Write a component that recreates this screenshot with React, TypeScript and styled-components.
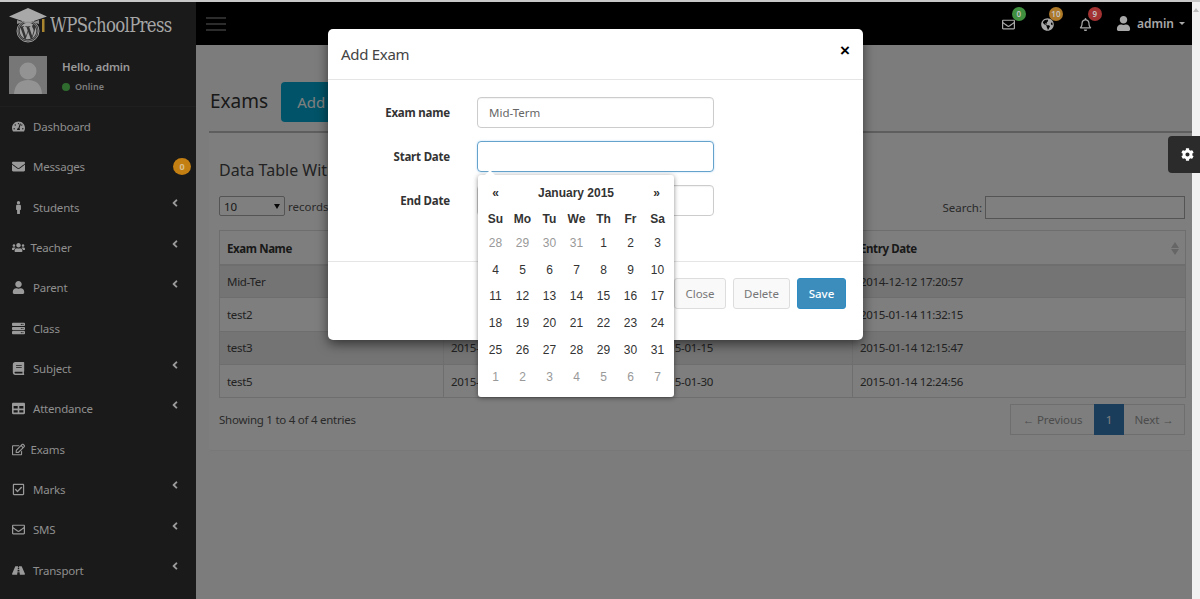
import React from "react";
import styled, { createGlobalStyle } from "styled-components";
import {
  FaBook,
  FaCog,
  FaEnvelope,
  FaGlobeAmericas,
  FaMale,
  FaRegBell,
  FaRegCheckSquare,
  FaRegEdit,
  FaRegEnvelope,
  FaRoad,
  FaServer,
  FaTable,
  FaTachometerAlt,
  FaUser,
  FaUsers,
  FaWordpress,
  FaAngleLeft,
} from "react-icons/fa";

const sans = `"Noto Sans", "Open Sans", sans-serif`;

const Global = createGlobalStyle`
  html, body { margin: 0; padding: 0; height: 100%; overflow: hidden; }
  body { font-family: ${sans}; font-size: 12px; color: #333; background: #fff; }
  * { box-sizing: border-box; }
`;

const Screen = styled.div`
  position: relative;
  height: 599px;
  display: flex;
  flex-direction: column;
  overflow: hidden;
`;
const TopLine = styled.div`
  position: relative;
  z-index: 1;
  height: 2px;
  flex: none;
  background: #c8c8c8;
`;
const Frame = styled.div`
  flex: 1;
  min-height: 0;
  display: flex;
`;
const Page = styled.div`
  flex: 1;
  min-width: 0;
  display: flex;
`;
const Scrollbar = styled.div`
  width: 8px;
  flex: none;
  background: #f1f1f1;
  display: flex;
  justify-content: center;
  padding-top: 6px;
  &::before {
    content: "";
    width: 0;
    height: 0;
    border-left: 3px solid transparent;
    border-right: 3px solid transparent;
    border-bottom: 4px solid #bdbdbd;
  }
`;

const Sidebar = styled.aside`
  position: relative;
  z-index: 1;
  width: 196px;
  flex: none;
  background: #1a1a1a;
  color: #8f8f8f;
  overflow: hidden;
`;
const Logo = styled.div`
  height: 43px;
  display: flex;
  align-items: center;
  padding: 2px 0 0 9px;
  gap: 3px;
  svg { display: block; }
`;
const LogoMark = styled.div`
  position: relative;
  width: 38px;
  height: 36px;
  flex: none;
`;
const LogoWp = styled(FaWordpress)`
  position: absolute;
  left: 9px;
  top: 14px;
  font-size: 20px;
  color: #a2a2a2;
`;
const LogoText = styled.span`
  font-family: "DejaVu Serif Condensed", "DejaVu Serif", serif;
  font-size: 20px;
  letter-spacing: -0.75px;
  color: #a6a6a6;
  line-height: 1;
  transform: scaleX(0.92);
  transform-origin: left center;
`;
const UserBlock = styled.div`
  height: 61.5px;
  display: flex;
  padding: 11px 0 0 9px;
  gap: 15px;
  border-bottom: 1px solid #1f1f1f;
`;
const Avatar = styled.svg`
  width: 38px;
  height: 38px;
  display: block;
`;
const UserInfo = styled.div`
  display: flex;
  flex-direction: column;
  padding-top: 3px;
`;
const Hello = styled.div`
  font-size: 11.5px;
  font-weight: 600;
  line-height: 16px;
  letter-spacing: -0.25px;
  color: #999;
`;
const Online = styled.div`
  display: flex;
  align-items: center;
  gap: 5px;
  margin-top: 6px;
  font-size: 9px;
  font-weight: 600;
  line-height: 12px;
  color: #7e7e7e;
`;
const Dot = styled.span`
  width: 8px;
  height: 8px;
  border-radius: 50%;
  background: #2f6b2f;
`;
const Menu = styled.nav`
  display: flex;
  flex-direction: column;
`;
const MenuItem = styled.div`
  height: 40.32px;
  display: flex;
  align-items: center;
  padding-left: 12px;
  font-size: 11.5px;
  letter-spacing: -0.2px;
  color: #8f8f8f;
`;
const MenuIcon = styled.span<{ $narrow?: boolean }>`
  width: ${(p) => (p.$narrow ? "18.5px" : "21px")};
  flex: none;
  display: flex;
  align-items: center;
  font-size: 13px;
  color: #9a9a9a;
`;
const MenuLabel = styled.span`
  flex: 1;
`;
const Chevron = styled(FaAngleLeft)`
  font-size: 12px;
  margin: -8px 15px 0 0;
  color: #9a9a9a;
`;
const CountBadge = styled.span`
  width: 18px;
  height: 17px;
  border-radius: 50%;
  margin-right: 5px;
  background: #c47f12;
  font-size: 9px;
  font-weight: 700;
  display: flex;
  align-items: center;
  justify-content: center;
  color: #d8c090;
`;

const Main = styled.main`
  flex: 1;
  min-width: 0;
  display: flex;
  flex-direction: column;
  background: #f9f9f9;
`;
const Header = styled.header`
  position: relative;
  z-index: 1;
  height: 43px;
  flex: none;
  background: #000;
  display: flex;
  align-items: center;
  justify-content: space-between;
  padding: 0 7px 0 10px;
`;
const Burger = styled.div`
  width: 20px;
  height: 14px;
  margin-top: 1px;
  border-top: 2px solid #2c2c2c;
  border-bottom: 2px solid #2c2c2c;
  display: flex;
  align-items: center;
  &::before {
    content: "";
    width: 100%;
    height: 2px;
    background: #2c2c2c;
  }
`;
const HeaderTools = styled.div`
  display: flex;
  align-items: center;
  color: #a8a8a8;
`;
const Tool = styled.div<{ $w: number }>`
  position: relative;
  width: ${(p) => p.$w}px;
  display: flex;
  align-items: center;
  font-size: 13px;
  padding-top: 1px;
`;
const ToolBadge = styled.span<{ $bg: string; $x: number }>`
  position: absolute;
  left: ${(p) => p.$x}px;
  top: -10px;
  width: 14px;
  height: 14px;
  border-radius: 50%;
  background: ${(p) => p.$bg};
  color: #c4c4c4;
  font-size: 8px;
  font-weight: 600;
  display: flex;
  align-items: center;
  justify-content: center;
`;
const Admin = styled.div`
  display: flex;
  align-items: center;
  gap: 6px;
  font-size: 12px;
  font-weight: 600;
  color: #a8a8a8;
  svg { font-size: 15px; }
  &::after {
    content: "";
    margin-left: -1px;
    border-left: 3.5px solid transparent;
    border-right: 3.5px solid transparent;
    border-top: 3.5px solid #a8a8a8;
  }
`;

const Content = styled.div`
  flex: 1;
  min-height: 0;
  padding: 0 0 0 13px;
`;
const TitleRow = styled.div`
  height: 88px;
  display: flex;
  align-items: flex-start;
  padding: 37px 0 0 1px;
  gap: 13px;
  border-bottom: 2px solid #bcbcbc;
`;
const PageTitle = styled.h1`
  margin: 6px 0 0;
  font-size: 19px;
  line-height: 26px;
  font-weight: 400;
  color: #333;
`;
const AddButton = styled.button`
  height: 40px;
  width: 120px;
  border: 0;
  border-radius: 4px;
  background: #00a7d0;
  color: #fff;
  font: 400 15px ${sans};
  text-align: left;
  padding-left: 16px;
`;
const Panel = styled.section`
  height: 318px;
  padding: 0 7px 0 10px;
  background: #fdfdfd;
  border-bottom: 1px solid #f0f0f0;
  border-radius: 0 0 3px 3px;
`;
const PanelTitle = styled.h2`
  margin: 0;
  padding-top: 25px;
  height: 63px;
  font-size: 16px;
  line-height: 24px;
  font-weight: 400;
  color: #444;
`;
const Controls = styled.div`
  height: 34px;
  display: flex;
  justify-content: space-between;
  align-items: flex-start;
`;
const LengthWrap = styled.div`
  display: flex;
  align-items: center;
  gap: 3px;
  font-size: 11.5px;
  color: #555;
`;
const LengthSelect = styled.div`
  width: 66px;
  height: 20px;
  border: 1px solid #a9a9a9;
  border-radius: 2px;
  background: #fff;
  display: flex;
  justify-content: space-between;
  align-items: center;
  padding: 0 4px;
  font-size: 11.5px;
  color: #333;
  &::after {
    content: "";
    border-left: 3.5px solid transparent;
    border-right: 3.5px solid transparent;
    border-top: 5px solid #111;
  }
`;
const SearchWrap = styled.label`
  display: flex;
  align-items: center;
  gap: 3px;
  font-size: 11.5px;
  color: #555;
`;
const SearchInput = styled.div`
  width: 200px;
  height: 23px;
  border: 1px solid #a9a9a9;
  background: #fff;
`;
const Table = styled.table`
  width: 966px;
  table-layout: fixed;
  border-collapse: collapse;
  font-size: 11.5px;
  letter-spacing: -0.3px;
  color: #444;
  th, td {
    border: 1px solid #ddd;
    text-align: left;
    padding: 0 7px;
    white-space: nowrap;
    overflow: hidden;
  }
  th {
    height: 34px;
    padding-top: 2px;
    font-weight: 700;
    letter-spacing: -0.4px;
    color: #333;
    border-bottom-width: 2px;
  }
  td { height: 33.3px; }
`;
const Row = styled.tr<{ $odd: boolean }>`
  background: ${(p) => (p.$odd ? "#e8e8e8" : "transparent")};
`;
const SortHead = styled.div`
  display: flex;
  justify-content: space-between;
  align-items: center;
`;
const SortIcon = styled.span`
  display: flex;
  flex-direction: column;
  gap: 1px;
  margin-right: -1px;
  &::before, &::after {
    content: "";
    border-left: 4.5px solid transparent;
    border-right: 4.5px solid transparent;
  }
  &::before { border-bottom: 6px solid #ccc; }
  &::after { border-top: 6px solid #ccc; }
`;
const TableFoot = styled.div`
  width: 966px;
  display: flex;
  justify-content: space-between;
  align-items: flex-start;
  padding-top: 6px;
`;
const Info = styled.div`
  font-size: 11.5px;
  letter-spacing: -0.25px;
  line-height: 31px;
  color: #555;
`;
const Pager = styled.div`
  height: 31px;
  display: flex;
  border: 1px solid #ddd;
  font-size: 11.5px;
  letter-spacing: -0.1px;
  color: #999;
`;
const PageLink = styled.span<{ $w: number; $active?: boolean }>`
  width: ${(p) => p.$w}px;
  margin: ${(p) => (p.$active ? "-1px 0" : "0")};
  display: flex;
  align-items: center;
  justify-content: center;
  background: ${(p) => (p.$active ? "#337ab7" : "transparent")};
  color: ${(p) => (p.$active ? "#fff" : "#999")};
`;

const Backdrop = styled.div`
  position: absolute;
  left: 0;
  top: 0;
  right: 8px;
  bottom: 0;
  background: rgba(0, 0, 0, 0.5);
`;
const GearTab = styled.div`
  position: absolute;
  top: 136px;
  right: 0;
  width: 32px;
  height: 37px;
  border-radius: 4px 0 0 4px;
  background: #2b2b2b;
  color: #fff;
  font-size: 13px;
  display: flex;
  align-items: center;
  justify-content: flex-end;
  padding-right: 6px;
`;
const Modal = styled.div`
  position: absolute;
  z-index: 2;
  left: 328px;
  top: 29px;
  width: 535px;
  height: 311px;
  background: #fff;
  border-radius: 5px;
  box-shadow: 0 4px 12px rgba(0, 0, 0, 0.55);
  display: flex;
  flex-direction: column;
`;
const ModalHead = styled.div`
  height: 51px;
  flex: none;
  display: flex;
  justify-content: space-between;
  align-items: center;
  padding: 0 13px;
  border-bottom: 1px solid #e5e5e5;
`;
const ModalTitle = styled.h4`
  margin: 0;
  font-size: 15px;
  font-weight: 400;
  letter-spacing: -0.3px;
  color: #444;
`;
const CloseX = styled.span`
  font: 700 17px "Liberation Sans", sans-serif;
  color: #000;
  margin: -6px 0 0;
`;
const ModalBody = styled.div`
  height: 182px;
  flex: none;
  padding-top: 17px;
  display: flex;
  flex-direction: column;
  gap: 13px;
  border-bottom: 1px solid #e5e5e5;
`;
const FormRow = styled.div`
  display: flex;
  align-items: center;
  gap: 27px;
`;
const FormLabel = styled.label`
  width: 122px;
  text-align: right;
  font-size: 11.5px;
  font-weight: 700;
  letter-spacing: -0.2px;
  color: #333;
`;
const TextBox = styled.div<{ $focus?: boolean }>`
  width: 237px;
  height: 31px;
  border: 1px solid ${(p) => (p.$focus ? "#66a3cc" : "#ccc")};
  border-radius: 4px;
  padding: 0 11px;
  display: flex;
  align-items: center;
  font-size: 11.5px;
  color: #666;
  box-shadow: ${(p) => (p.$focus ? "0 0 2px rgba(102,175,233,.5)" : "inset 0 1px 1px rgba(0,0,0,.05)")};
`;
const ModalFoot = styled.div`
  flex: 1;
  display: flex;
  justify-content: flex-end;
  gap: 7px;
  padding: 16px 17px 0 0;
`;
const Btn = styled.button<{ $primary?: boolean; $w: number }>`
  width: ${(p) => p.$w}px;
  height: 31px;
  border-radius: 3px;
  border: 1px solid ${(p) => (p.$primary ? "#2e8cc4" : "#ddd")};
  background: ${(p) => (p.$primary ? "#3c8dbc" : "#f9f9f9")};
  color: ${(p) => (p.$primary ? "#fff" : "#777")};
  font: 400 11.5px ${sans};
  font-weight: ${(p) => (p.$primary ? 500 : 400)};
  padding: 0;
`;
const Picker = styled.div`
  position: absolute;
  z-index: 2;
  left: 478px;
  top: 175px;
  width: 196px;
  height: 222px;
  background: #fff;
  border-radius: 3px;
  box-shadow: 0 1px 5px rgba(0, 0, 0, 0.45);
  padding: 4px 4px 0;
  font-family: "Liberation Sans", Arial, sans-serif;
  font-size: 12px;
  color: #333;
  &::before {
    content: "";
    position: absolute;
    left: 7px;
    top: -5px;
    border-left: 5px solid transparent;
    border-right: 5px solid transparent;
    border-bottom: 5px solid #fff;
  }
`;
const PickerHead = styled.div`
  height: 28.5px;
  display: grid;
  grid-template-columns: 27px 1fr 27px;
  align-items: center;
  text-align: center;
  font-weight: 700;
`;
const PickerGrid = styled.div`
  display: grid;
  grid-template-columns: repeat(7, 27px);
  grid-template-rows: 22px repeat(6, 26.8px);
  align-items: center;
  text-align: center;
`;
const Dow = styled.div`
  font-weight: 700;
`;
const Day = styled.div<{ $muted: boolean }>`
  color: ${(p) => (p.$muted ? "#999" : "#333")};
`;

const menu = [
  { label: "Dashboard", icon: <FaTachometerAlt /> },
  { label: "Messages", icon: <FaEnvelope />, badge: "0" },
  { label: "Students", icon: <FaMale />, sub: true },
  { label: "Teacher", icon: <FaUsers />, sub: true, narrow: true },
  { label: "Parent", icon: <FaUser />, sub: true },
  { label: "Class", icon: <FaServer /> },
  { label: "Subject", icon: <FaBook />, sub: true },
  { label: "Attendance", icon: <FaTable />, sub: true },
  { label: "Exams", icon: <FaRegEdit />, narrow: true },
  { label: "Marks", icon: <FaRegCheckSquare />, sub: true },
  { label: "SMS", icon: <FaRegEnvelope />, sub: true },
  { label: "Transport", icon: <FaRoad />, sub: true },
];

const rows = [
  ["Mid-Ter", "2014-12-12", "2014-12-31", "2014-12-12 17:20:57"],
  ["test2", "2015-01-14", "2015-01-20", "2015-01-14 11:32:15"],
  ["test3", "2015-01-14", "2015-01-15", "2015-01-14 12:15:47"],
  ["test5", "2015-01-14", "2015-01-30", "2015-01-14 12:24:56"],
];

const dows = ["Su", "Mo", "Tu", "We", "Th", "Fr", "Sa"];
const days: { n: number; muted: boolean }[] = [
  ...[28, 29, 30, 31].map((n) => ({ n, muted: true })),
  ...Array.from({ length: 31 }, (_, i) => ({ n: i + 1, muted: false })),
  ...[1, 2, 3, 4, 5, 6, 7].map((n) => ({ n, muted: true })),
];

export default function App() {
  return (
    <Screen>
      <Global />
      <TopLine />
      <Frame>
        <Page>
          <Sidebar>
            <Logo>
              <LogoMark>
                <svg width="38" height="36" viewBox="0 0 38 36">
                  <circle cx="19" cy="24" r="11" fill="#333" stroke="#999" strokeWidth="1" />
                  <path d="M19 1 L38 9.5 L19 16 L0 9.5 Z" fill="#a8a8a8" />
                  <path d="M8 13 L19 17 L30 13 L30 17 Q19 12 8 17 Z" fill="#8c8c8c" />
                  <rect x="33" y="12" width="2.5" height="13" fill="#a8852e" />
                </svg>
                <LogoWp />
              </LogoMark>
              <LogoText>WPSchoolPress</LogoText>
            </Logo>
            <UserBlock>
              <Avatar viewBox="0 0 38 38">
                <rect width="38" height="38" fill="#777" />
                <circle cx="19" cy="15" r="8.5" fill="#939393" />
                <path d="M5 38 Q6 24 19 24 Q32 24 33 38 Z" fill="#939393" />
              </Avatar>
              <UserInfo>
                <Hello>Hello, admin</Hello>
                <Online>
                  <Dot />
                  Online
                </Online>
              </UserInfo>
            </UserBlock>
            <Menu>
              {menu.map((m) => (
                <MenuItem key={m.label}>
                  <MenuIcon $narrow={m.narrow}>{m.icon}</MenuIcon>
                  <MenuLabel>{m.label}</MenuLabel>
                  {m.badge && <CountBadge>{m.badge}</CountBadge>}
                  {m.sub && <Chevron />}
                </MenuItem>
              ))}
            </Menu>
          </Sidebar>
          <Main>
            <Header>
              <Burger />
              <HeaderTools>
                <Tool $w={39}>
                  <FaRegEnvelope />
                  <ToolBadge $bg="#3f8f3f" $x={10}>0</ToolBadge>
                </Tool>
                <Tool $w={38}>
                  <FaGlobeAmericas />
                  <ToolBadge $bg="#ad7828" $x={8}>10</ToolBadge>
                </Tool>
                <Tool $w={37}>
                  <FaRegBell />
                  <ToolBadge $bg="#a33232" $x={9}>9</ToolBadge>
                </Tool>
                <Admin>
                  <FaUser />
                  admin
                </Admin>
              </HeaderTools>
            </Header>
            <Content>
              <TitleRow>
                <PageTitle>Exams</PageTitle>
                <AddButton>Add Exam</AddButton>
              </TitleRow>
              <Panel>
                <PanelTitle>Data Table With Full Features</PanelTitle>
                <Controls>
                  <LengthWrap>
                    <LengthSelect>10</LengthSelect>
                    records per page
                  </LengthWrap>
                  <SearchWrap>
                    Search:
                    <SearchInput />
                  </SearchWrap>
                </Controls>
                <Table>
                  <colgroup>
                    <col width={224} />
                    <col width={205} />
                    <col width={204} />
                    <col width={333} />
                  </colgroup>
                  <thead>
                    <tr>
                      <th>Exam Name</th>
                      <th>Start Date</th>
                      <th>End Date</th>
                      <th>
                        <SortHead>
                          Entry Date
                          <SortIcon />
                        </SortHead>
                      </th>
                    </tr>
                  </thead>
                  <tbody>
                    {rows.map((r, i) => (
                      <Row key={r[0]} $odd={i % 2 === 0}>
                        {r.map((c, j) => (
                          <td key={j}>{c}</td>
                        ))}
                      </Row>
                    ))}
                  </tbody>
                </Table>
                <TableFoot>
                  <Info>Showing 1 to 4 of 4 entries</Info>
                  <Pager>
                    <PageLink $w={83}>← Previous</PageLink>
                    <PageLink $w={30} $active>
                      1
                    </PageLink>
                    <PageLink $w={60}>Next →</PageLink>
                  </Pager>
                </TableFoot>
              </Panel>
            </Content>
          </Main>
        </Page>
        <Scrollbar />
      </Frame>
      <Backdrop />
      <GearTab>
        <FaCog />
      </GearTab>
      <Modal>
        <ModalHead>
          <ModalTitle>Add Exam</ModalTitle>
          <CloseX>×</CloseX>
        </ModalHead>
        <ModalBody>
          <FormRow>
            <FormLabel>Exam name</FormLabel>
            <TextBox>Mid-Term</TextBox>
          </FormRow>
          <FormRow>
            <FormLabel>Start Date</FormLabel>
            <TextBox $focus />
          </FormRow>
          <FormRow>
            <FormLabel>End Date</FormLabel>
            <TextBox />
          </FormRow>
        </ModalBody>
        <ModalFoot>
          <Btn $w={52}>Close</Btn>
          <Btn $w={57}>Delete</Btn>
          <Btn $w={49} $primary>
            Save
          </Btn>
        </ModalFoot>
      </Modal>
      <Picker>
        <PickerHead>
          <span>«</span>
          <span>January 2015</span>
          <span>»</span>
        </PickerHead>
        <PickerGrid>
          {dows.map((d) => (
            <Dow key={d}>{d}</Dow>
          ))}
          {days.map((d, i) => (
            <Day key={i} $muted={d.muted}>
              {d.n}
            </Day>
          ))}
        </PickerGrid>
      </Picker>
    </Screen>
  );
}
